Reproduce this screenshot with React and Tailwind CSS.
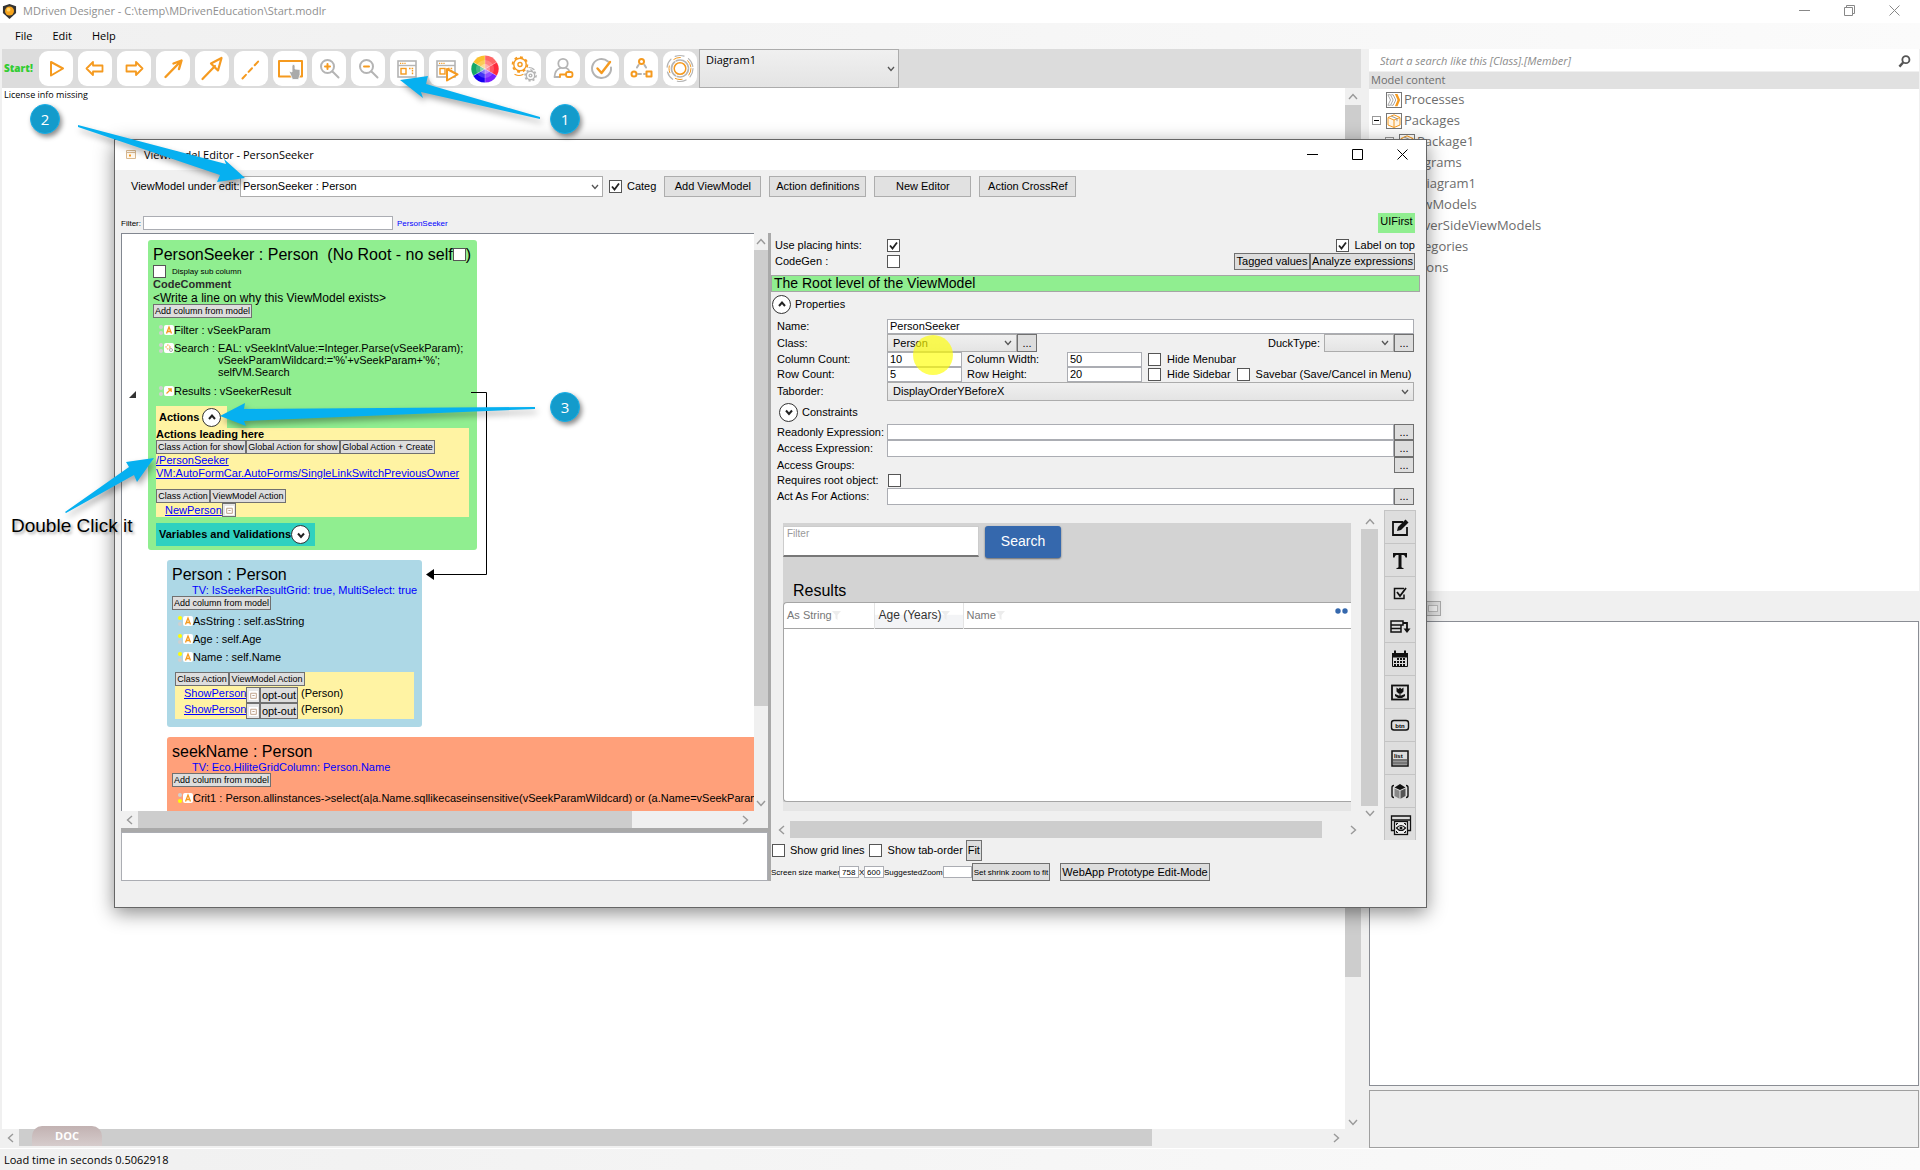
import React from "react";

const ORANGE = "#f59a1f";
const GRAY = "#b4b4b4";

function Check({ id, checked, label, className = "size-[13px]" }) {
    return (
        <span className="relative inline-flex shrink-0">
            <input id={id} type="checkbox" defaultChecked={checked} aria-label={label} className={"peer appearance-none border border-[#555] bg-white " + className} />
            <svg viewBox="0 0 13 13" className="pointer-events-none absolute inset-0 hidden size-[13px] peer-checked:block">
                <path d="M3 6.5 5.5 9.5 10 3.5" fill="none" stroke="#222" strokeWidth="1.8" />
            </svg>
        </span>
    );
}

function Select({ id, label, value, className = "", selectClass = "", chevron = "right-[4px]" }) {
    return (
        <span className={"relative inline-flex shrink-0 " + className}>
            <select id={id} aria-label={label} className={"h-full w-full appearance-none border border-[#acacac] " + selectClass}>
                <option>{value}</option>
            </select>
            <svg viewBox="0 0 8 6" className={"pointer-events-none absolute top-1/2 h-[6px] w-[8px] -translate-y-1/2 " + chevron}>
                <path d="M1 1 4 4.5 7 1" fill="none" stroke="#555" strokeWidth="1.3" />
            </svg>
        </span>
    );
}

function FlatButton({ children, className = "" }) {
    return (
        <button className={"flex shrink-0 items-center justify-center border border-[#707070] bg-[#dddddd] whitespace-nowrap " + className}>
            {children}
        </button>
    );
}

const ARROWS = {
    up: "M2 8 6 3.5 10 8",
    down: "M2 4 6 8.5 10 4",
    left: "M8 2 3.5 6 8 10",
    right: "M4 2 8.5 6 4 10",
};

function ScrollArrow({ dir }) {
    return (
        <svg viewBox="0 0 12 12" className="size-[12px] shrink-0">
            <path d={ARROWS[dir]} fill="none" stroke="#999" strokeWidth="1.4" />
        </svg>
    );
}

function Expander({ open, label }) {
    return (
        <button aria-label={label} className="flex size-[19px] shrink-0 items-center justify-center rounded-full border border-[#333] bg-white">
            <svg viewBox="0 0 10 10" className="size-[10px]">
                <path d={open ? "M2 7 5 3.5 8 7" : "M2 3.5 5 7 8 3.5"} fill="none" stroke="#222" strokeWidth="2" />
            </svg>
        </button>
    );
}

/* ---------- main toolbar ---------- */

function WindowShape() {
    return (
        <>
            <rect x="8" y="10" width="18" height="16" fill="none" stroke={GRAY} strokeWidth="1.6" />
            <path d="M8 14.5h18" stroke={GRAY} strokeWidth="1.4" />
            <path d="M10 12.3h6" stroke={ORANGE} strokeWidth="1.2" strokeDasharray="1.2 1" />
            <rect x="11" y="17.5" width="5" height="5.5" fill="none" stroke={ORANGE} strokeWidth="1.4" />
            <path d="M19 17.5h5M22.5 19v5" stroke={ORANGE} strokeWidth="1.4" strokeDasharray="1.6 1" />
        </>
    );
}

const WHEEL = ["#ff6666", "#ff2b3d", "#7a1fff", "#1500f0", "#14a866", "#fbc02d"];

function ColorWheel() {
    return (
        <>
            {WHEEL.map((c, i) => {
                const a = (i * 60 - 90) * Math.PI / 180;
                const b = a + Math.PI / 3;
                const p = (t) => (17 + 13.6 * Math.cos(t)) + " " + (18 + 13.6 * Math.sin(t));
                return <path key={c} d={`M17 18 L${p(a)} A13.6 13.6 0 0 1 ${p(b)}Z`} fill={c} />;
            })}
            <circle cx="17" cy="18" r="9" fill="#fff" opacity="0.2" />
            <circle cx="17" cy="18" r="5" fill="#fff" opacity="0.35" />
            <path d="M17 4.5v27M5.3 11.2 28.7 24.8M5.3 24.8 28.7 11.2" stroke="#fff" strokeWidth="0.5" opacity="0.6" />
        </>
    );
}

function Cog({ x, y, r, color }) {
    return (
        <g fill="none" stroke={color}>
            <circle cx={x} cy={y} r={r} strokeWidth="1.4" />
            <circle cx={x} cy={y} r={r + 1.2} strokeWidth="1.8" pathLength="32" strokeDasharray="2 2" />
            <circle cx={x} cy={y} r={r / 3} strokeWidth="1.4" />
        </g>
    );
}

const line = { fill: "none", stroke: ORANGE, strokeWidth: 2, strokeLinejoin: "round", strokeLinecap: "round" };
const grayLine = { ...line, stroke: GRAY };

const TOOLS = [
    ["Run", <path d="M12 11 24 17.5 12 24.5Z" {...line} />],
    ["Back", <path d="M8.5 17.5 15 11v3.5h9.5v6H15V24Z" {...line} strokeWidth="1.8" />],
    ["Forward", <path d="M25.5 17.5 19 11v3.5H9.5v6H19V24Z" {...line} strokeWidth="1.8" />],
    ["Association", <path d="M9.5 26 25 10M17.5 12.5 25.5 9.5 23 18" {...line} strokeWidth="2.4" />],
    ["Inheritance", <path d="M7.500 28 20 15M16 12.5 26.5 7 23 19.5Z" {...line} strokeWidth="2.2" />],
    ["Dashed line", <path d="M8.5 27.5 26 8.5" {...line} strokeDasharray="5 4" />],
    ["Placing", <><rect x="6" y="10" width="23" height="15.5" {...line} /><path d="M16 20l3 1v-6.5q1.5-2 3 0v3.5l5 .5v5l-1.5 5h-6Z" fill="#aaa" stroke="#fff" strokeWidth="0.8" /></>],
    ["Zoom in", <><circle cx="15.5" cy="15.5" r="6.5" {...grayLine} /><path d="m20.5 20.5 6 6" {...grayLine} /><path d="M15.5 13v5M13 15.5h5" {...line} /></>],
    ["Zoom out", <><circle cx="15.5" cy="15.5" r="6.5" {...grayLine} /><path d="m20.5 20.5 6 6" {...grayLine} /><path d="M13 15.5h5" {...line} /></>],
    ["ViewModel editor", <WindowShape />],
    ["Run ViewModel", <><WindowShape /><path d="M18 18 28.5 23.5 18 29.5Z" {...line} fill="#fff" /></>],
    ["Colors", <ColorWheel />],
    ["Settings", <><Cog x={13} y={13.5} r={6.2} color={ORANGE} /><Cog x={23.5} y={24.5} r={4.2} color={GRAY} /><path d="M8 23.500q4 2 8 0" {...line} strokeWidth="1.2" /><path d="M22 16.5q3 0 5 2" {...grayLine} strokeWidth="1.2" /></>],
    ["Access", <><circle cx="17" cy="12.5" r="4.7" {...grayLine} strokeWidth="1.8" /><path d="M14.5 17q-5.500 1.5-6 9h5M20 17q2 .5 3 2.5" {...grayLine} strokeWidth="1.8" /><rect x="20" y="21" width="6.5" height="5" rx="2" {...line} strokeWidth="1.8" /><path d="M20 23.5h-6v2.5" {...line} strokeWidth="1.8" /></>],
    ["Validate", <><path d="M23 10.5a9.5 9.5 0 1 0 3 6" {...grayLine} /><path d="m12.5 17.5 4 4.5 8.5-11" {...line} strokeWidth="2.4" /></>],
    ["Structure", <><path d="M14.5 14 11.5 19M20.5 14l3 5M14 23h7" {...grayLine} strokeDasharray="3 3" /><circle cx="17.5" cy="10.5" r="2.5" {...line} /><circle cx="10" cy="23" r="2.5" {...line} /><rect x="22.5" y="20.5" width="5" height="5" {...line} /></>],
    ["Generate", <><circle cx="17" cy="17.5" r="13" {...grayLine} strokeWidth="1.2" strokeDasharray="9 5" /><circle cx="17" cy="17.5" r="11" {...line} strokeWidth="1" strokeDasharray="7 8" /><circle cx="17" cy="17.5" r="8.5" {...grayLine} strokeWidth="1.7" strokeDasharray="16 2" /><circle cx="17" cy="17.5" r="5.8" {...line} strokeWidth="1.5" /></>],
];

function Toolbar() {
    return (
        <div className="ml-[2px] flex h-[39px] bg-[#dcdcdc]">
            <button className="w-[37px] shrink-0 pl-[2px] text-left text-[10px] font-extrabold text-[#32cd32]">Start!</button>
            <div className="flex items-center gap-[5px]">
                {TOOLS.map(([name, icon]) => (
                    <button key={name} aria-label={name} className="h-[35px] w-[34px] shrink-0 rounded-[9px] bg-white">
                        <svg viewBox="0 0 34 35" className="h-[35px] w-[34px]">{icon}</svg>
                    </button>
                ))}
            </div>
            <Select label="Diagram" value="Diagram1" className="ml-[2px] h-[39px] w-[200px]" selectClass="bg-linear-to-b from-[#f0f0f0] to-[#e4e4e4] px-[6px] pb-[16px] text-[11px]" />
        </div>
    );
}

/* ---------- model tree, right side ---------- */

function PackageIcon() {
    return (
        <svg viewBox="0 0 14 14" className="size-[16px] shrink-0 border border-[#777]">
            <path d="M1 3.5 7 .8l6 2.700v7.500L7 13.500 1 11ZM1 3.500l6 2.500 6-2.500M7 6v7.500" fill="#fff6e8" stroke={ORANGE} />
            <path d="M4 2 10 4.700v2.500" fill="none" stroke="#999" />
        </svg>
    );
}

function ProcessIcon() {
    return (
        <svg viewBox="0 0 16 16" className="size-[16px] shrink-0 border border-[#777]">
            <path d="M1 2h3l3 6-3 6H1l3-6ZM5 2h2l3 6-3 6H5" fill="none" stroke="#999" />
            <path d="M9 1h3l3 7-3 7H9l3-7Z" fill={ORANGE} />
        </svg>
    );
}

const TREE = [
    { name: "Processes", level: 0, icon: <ProcessIcon /> },
    { name: "Packages", level: 0, icon: <PackageIcon />, open: true },
    { name: "Package1", level: 1, icon: <PackageIcon />, open: true },
    { name: "Diagrams", level: 0, icon: <PackageIcon /> },
    { name: "Diagram1", level: 1, icon: <PackageIcon /> },
    { name: "ViewModels", level: 0, icon: <PackageIcon /> },
    { name: "ServerSideViewModels", level: 0, icon: <PackageIcon /> },
    { name: "Categories", level: 0, icon: <PackageIcon /> },
    { name: "Actions", level: 0, icon: <PackageIcon /> },
];

function ModelPanel() {
    return (
        <aside className="flex w-[551px] shrink-0 flex-col pr-px text-[#6d6d6d]">
            <div className="flex h-[22px] items-center bg-white pt-[3px] pr-[8px] pl-[11px]">
                <input aria-label="Search model" placeholder="Start a search like this [Class].[Member]" className="min-w-0 flex-1 text-[11px] italic outline-none placeholder:text-[#8c8c8c]" />
                <svg viewBox="0 0 14 14" className="size-[13px]">
                    <circle cx="8.5" cy="5" r="3.8" fill="none" stroke="#555" strokeWidth="2" />
                    <path d="M5.5 8 1.5 12.5" stroke="#555" strokeWidth="2.6" />
                </svg>
            </div>
            <h2 className="mt-px h-[17px] bg-[#e1e1e1] pl-[2px] text-[11px] leading-[16px]">Model content</h2>
            <ul className="flex-[503_1_0px] bg-white text-[13px]">
                {TREE.map((t) => (
                    <li key={t.name} className={"flex h-[21px] items-center " + (t.level ? "pl-[16px]" : "pl-[3px]")}>
                        <span className="w-[14px] shrink-0">
                            {t.open && <span className="flex size-[9px] items-center justify-center border border-[#999] bg-white"><span className="h-px w-[5px] bg-black" /></span>}
                        </span>
                        {t.icon}
                        <span className="pl-[2px]">{t.name}</span>
                    </li>
                ))}
            </ul>
            <div className="flex h-[30px] items-center bg-[#f0f0f0] pt-[6px] pl-[56px]">
                <button aria-label="Details" className="flex h-[15px] w-[16px] items-center justify-center border border-[#aaa] bg-[#e0e0e0]">
                    <span className="h-[7px] w-[10px] border border-[#bbb] bg-[#f4f4f4]" />
                </button>
            </div>
            <div className="flex-[464_1_0px] border border-[#8a8d94] bg-white" />
            <div className="mt-[4px] h-[58px] border border-[#a0a0a0] bg-[#f0f0f0]" />
        </aside>
    );
}

/* ---------- view model columns, left side of the dialog ---------- */

function ColumnIcon({ kind = "text", top = "bg-[#d0d0d0]", bottom = "bg-[#d0d0d0]" }) {
    return (
        <span className="flex h-[10px] w-[15px] shrink-0 gap-px">
            <span className="flex w-[4px] flex-col justify-between">
                <span className={"h-[4px] rounded-[2px] " + top} />
                <span className={"h-[4px] rounded-[2px] " + bottom} />
            </span>
            <svg viewBox="0 0 10 10" className="size-[10px] rounded-[2px] bg-white">
                {kind === "text" && <path d="M2.5 8.5 5 2 7.5 8.5M3.5 6.5h3" fill="none" stroke={ORANGE} strokeWidth="1.3" />}
                {kind === "gear" && <><circle cx="4" cy="4" r="2" fill="none" stroke={ORANGE} strokeDasharray="1.5 1" /><circle cx="7" cy="7" r="1.5" fill="none" stroke="#aaa" /></>}
                {kind === "arrow" && <path d="M2.5 7.5 7 3M4 2.8h3.2V6" fill="none" stroke={ORANGE} strokeWidth="1.2" />}
            </svg>
        </span>
    );
}

function Column({ children, ...icon }) {
    return (
        <div className="flex h-[18px] items-center pl-[6px] text-[11px]">
            <ColumnIcon {...icon} />
            {children}
        </div>
    );
}

function MiniWindow({ className = "" }) {
    return (
        <button aria-label="Open action" className={"flex w-[14px] shrink-0 items-center justify-center border border-[#707070] bg-[#e6e6e6] " + className}>
            <svg viewBox="0 0 8 8" className="size-[9px] bg-white">
                <path d="M1.5 2h5v4.5h-5ZM3 4h2" fill="none" stroke="#b99a80" strokeWidth="0.8" />
            </svg>
        </button>
    );
}

const MARK_YELLOW = "bg-[#ffff00]";

function Connector() {
    return (
        <svg viewBox="0 0 64 194" className="absolute top-[152px] left-[303px] h-[194px] w-[64px]">
            <path d="M46 6.5H61.5V188.5H8" fill="none" stroke="#000" />
            <path d="M1 188.5 9 183v11Z" fill="#000" />
        </svg>
    );
}

function ViewModelCanvas() {
    return (
        <div className="relative flex min-w-0 flex-1 overflow-hidden border-t border-l border-[#828790] bg-white whitespace-nowrap">
            <div className="w-[26px] shrink-0 pt-[157px] pl-[7px]">
                <svg viewBox="0 0 7 7" className="size-[7px]"><path d="M7 0v7H0Z" fill="#333" /></svg>
            </div>
            <div className="shrink-0 pt-[6px]">
                <section className="w-[329px] rounded-[3px] bg-[#90ee90] px-[5px] pt-[4px] pb-[4px]">
                    <h3 className="flex h-[20px] items-center text-[16px] whitespace-pre">
                        PersonSeeker : Person  (No Root - no self<Check label="Has self" className="size-[13px]" />)
                    </h3>
                    <div className="flex h-[14px] items-center gap-[6px] text-[8px]">
                        <Check id="display-sub" />
                        <label htmlFor="display-sub">Display sub column</label>
                    </div>
                    <div className="h-[13px] text-[11px] leading-[13px] font-bold text-[#2b2b2b]">CodeComment</div>
                    <div className="h-[13px] text-[12px] leading-[14px]">&lt;Write a line on why this ViewModel exists&gt;</div>
                    <FlatButton className="h-[14px] w-[99px] text-[9px]">Add column from model</FlatButton>
                    <div className="pt-[3px]">
                        <Column>Filter : vSeekParam</Column>
                    </div>
                    <div className="mt-[3px] flex pl-[6px] text-[11px] leading-[12px]">
                        <span className="pt-px"><ColumnIcon kind="gear" /></span>
                        <span className="w-[44px]">Search :</span>
                        <span className="whitespace-pre">{"EAL: vSeekIntValue:=Integer.Parse(vSeekParam);\nvSeekParamWildcard:='%'+vSeekParam+'%';\nselfVM.Search"}</span>
                    </div>
                    <div className="pt-[4px]">
                        <Column kind="arrow">Results : vSeekerResult</Column>
                    </div>

                    <div className="mt-[6px] ml-[3px] flex h-[22px] w-[71px] items-center gap-[3px] bg-[#fff3a3] pl-[3px] text-[11px] font-bold">
                        Actions <Expander open label="Collapse actions" />
                    </div>
                    <div className="ml-[3px] w-[313px] bg-[#fff3a3] text-[11px]">
                        <div className="h-[12px] leading-[12px] font-bold">Actions leading here</div>
                        <div className="flex h-[14px] text-[9px]">
                            <FlatButton className="w-[90px]">Class Action for show</FlatButton>
                            <FlatButton className="w-[94px]">Global Action for show</FlatButton>
                            <FlatButton className="w-[95px]">Global Action + Create</FlatButton>
                        </div>
                        <div className="h-[13px] leading-[13px]"><a href="#" className="text-[#0000ff] underline">/PersonSeeker</a></div>
                        <div className="h-[13px] leading-[13px]"><a href="#" className="text-[#0000ff] underline">VM:AutoFormCar.AutoForms/SingleLinkSwitchPreviousOwner</a></div>
                        <div className="mt-[9px] flex h-[14px] text-[9px]">
                            <FlatButton className="w-[54px]">Class Action</FlatButton>
                            <FlatButton className="w-[76px]">ViewModel Action</FlatButton>
                        </div>
                        <div className="flex h-[14px] pl-[9px] leading-[14px]">
                            <a href="#" className="w-[57px] text-[#0000ff] underline">NewPerson</a>
                            <MiniWindow />
                        </div>
                    </div>
                    <div className="mt-[6px] ml-[3px] flex h-[23px] w-[159px] items-center justify-between bg-[#2fd1c0] pr-[6px] pl-[3px] text-[11px] font-bold">
                        Variables and Validations <Expander label="Expand variables and validations" />
                    </div>
                </section>

                <section className="mt-[10px] ml-[19px] w-[255px] rounded-[3px] bg-[#add8e6] px-[5px] pt-[4px] pb-[8px]">
                    <h3 className="flex h-[20px] items-center text-[16px]">Person : Person</h3>
                    <div className="h-[12px] pl-[20px] text-[11px] leading-[12px] text-[#0000ff]">TV: IsSeekerResultGrid: true, MultiSelect: true</div>
                    <FlatButton className="mb-[2px] h-[14px] w-[99px] text-[9px]">Add column from model</FlatButton>
                    <Column top={MARK_YELLOW}>AsString : self.asString</Column>
                    <Column top={MARK_YELLOW}>Age : self.Age</Column>
                    <Column top={MARK_YELLOW}>Name : self.Name</Column>
                    <div className="mt-[6px] ml-[3px] w-[239px] bg-[#fff3a3] text-[11px]">
                        <div className="mb-px flex h-[14px] text-[9px]">
                            <FlatButton className="w-[54px]">Class Action</FlatButton>
                            <FlatButton className="w-[76px]">ViewModel Action</FlatButton>
                        </div>
                        {[1, 2].map((n) => (
                            <div key={n} className="flex h-[16px] pl-[9px] leading-[13px]">
                                <a href="#" className="w-[62px] text-[#0000ff] underline">ShowPerson</a>
                                <MiniWindow />
                                <FlatButton className="w-[38px]">opt-out</FlatButton>
                                <span className="pl-[3px]">(Person)</span>
                            </div>
                        ))}
                    </div>
                </section>

                <section className="mt-[10px] ml-[19px] h-[100px] w-[700px] rounded-[3px] bg-[#ffa07a] px-[5px] pt-[4px]">
                    <h3 className="flex h-[20px] items-center text-[16px]">seekName : Person</h3>
                    <div className="h-[12px] pl-[20px] text-[11px] leading-[12px] text-[#0000ff]">TV: Eco.HiliteGridColumn: Person.Name</div>
                    <FlatButton className="mb-[2px] h-[14px] w-[99px] text-[9px]">Add column from model</FlatButton>
                    <Column bottom={MARK_YELLOW}>Crit1 : Person.allinstances-&gt;select(a|a.Name.sqllikecaseinsensitive(vSeekParamWildcard) or (a.Name=vSeekParam))</Column>
                </section>
            </div>
            <Connector />
        </div>
    );
}

/* ---------- properties, right side of the dialog ---------- */

const comboStyle = "bg-linear-to-b from-[#f0f0f0] to-[#e4e4e4] pl-[5px]";

function Field({ id, label, height, children }) {
    return (
        <div className={"flex items-stretch " + height}>
            <label htmlFor={id} className="flex w-[110px] shrink-0 items-center whitespace-nowrap">{label}</label>
            {children}
        </div>
    );
}

function TextBox({ id, value = "", className = "flex-1" }) {
    return <input id={id} defaultValue={value} className={"min-w-0 border border-[#abadb3] bg-white px-[2px] " + className} />;
}

function Properties() {
    return (
        <div className="pt-[3px] pr-[12px] pl-[6px]">
            <Field id="vm-name" label="Name:" height="h-[15px]"><TextBox id="vm-name" value="PersonSeeker" /></Field>
            <Field id="vm-class" label="Class:" height="h-[18px]">
                <Select id="vm-class" value="Person" className="w-[130px]" selectClass={comboStyle} chevron="right-[5px]" />
                <FlatButton className="w-[20px]">...</FlatButton>
                <label htmlFor="vm-duck" className="mr-[4px] ml-auto self-center">DuckType:</label>
                <Select id="vm-duck" value="" className="w-[70px]" selectClass={comboStyle} chevron="right-[5px]" />
                <FlatButton className="w-[20px]">...</FlatButton>
            </Field>
            <Field id="vm-cols" label="Column Count:" height="h-[15px]">
                <TextBox id="vm-cols" value="10" className="w-[75px]" />
                <label htmlFor="vm-colw" className="flex w-[105px] items-center pl-[5px]">Column Width:</label>
                <TextBox id="vm-colw" value="50" className="w-[75px]" />
                <span className="flex items-center gap-[6px] pl-[6px]">
                    <Check id="hide-menu" /><label htmlFor="hide-menu">Hide Menubar</label>
                </span>
            </Field>
            <Field id="vm-rows" label="Row Count:" height="h-[15px]">
                <TextBox id="vm-rows" value="5" className="w-[75px]" />
                <label htmlFor="vm-rowh" className="flex w-[105px] items-center pl-[5px]">Row Height:</label>
                <TextBox id="vm-rowh" value="20" className="w-[75px]" />
                <span className="flex items-center gap-[6px] pl-[6px] whitespace-nowrap">
                    <Check id="hide-side" /><label htmlFor="hide-side">Hide Sidebar</label>
                    <Check id="savebar" /><label htmlFor="savebar">Savebar (Save/Cancel in Menu)</label>
                </span>
            </Field>
            <Field id="vm-tab" label="Taborder:" height="h-[19px]">
                <Select id="vm-tab" value="DisplayOrderYBeforeX" className="flex-1" selectClass={comboStyle} chevron="right-[5px]" />
            </Field>
            <div className="mb-px flex h-[22px] items-center gap-[4px] pl-[2px]"><Expander label="Expand constraints" />Constraints</div>
            <Field id="vm-ro" label="Readonly Expression:" height="h-[16px]"><TextBox id="vm-ro" /><FlatButton className="w-[20px]">...</FlatButton></Field>
            <Field id="vm-acc" label="Access Expression:" height="h-[17px]"><TextBox id="vm-acc" /><FlatButton className="w-[20px]">...</FlatButton></Field>
            <Field id="vm-groups" label="Access Groups:" height="h-[16px]"><button id="vm-groups" className="ml-auto w-[20px] border border-[#707070] bg-[#dddddd]">...</button></Field>
            <Field id="vm-root" label="Requires root object:" height="h-[15px]"><span className="flex items-center pl-px"><Check id="vm-root" /></span></Field>
            <Field id="vm-act" label="Act As For Actions:" height="h-[17px]"><TextBox id="vm-act" /><FlatButton className="w-[20px]">...</FlatButton></Field>
        </div>
    );
}

function Funnel() {
    return <svg viewBox="0 0 9 9" className="inline size-[9px]"><path d="M0 0h9L5.5 4v5L3.5 7.500V4Z" fill="#ececec" /></svg>;
}

function Preview() {
    return (
        <div className="mt-[13px] mr-[10px] ml-[12px] flex min-w-0 flex-1 flex-col bg-[#d3d3d3]">
            <div className="flex h-[37px] items-center gap-[6px]">
                <div className="flex h-[31px] w-[196px] flex-col border border-b-2 border-[#ccc] border-b-[#777] bg-white px-[3px]">
                    <label htmlFor="seek-filter" className="text-[10px] leading-[14px] text-[#999]">Filter</label>
                    <input id="seek-filter" className="h-[12px] outline-none" />
                </div>
                <button className="h-[32px] w-[76px] rounded-[3px] bg-[#3568ad] text-[14px] text-white shadow-[0_1px_2px_rgba(0,0,0,0.5)]">Search</button>
            </div>
            <h3 className="mt-[19px] h-[23px] pl-[10px] text-[16px] leading-[24px]">Results</h3>
            <div className="flex flex-1 items-start rounded-l-[4px] border-y border-l border-[#a5a5a5] bg-white">
                <table className="w-full border-collapse text-[11px] text-[#777]">
                    <thead>
                        <tr className="h-[25px] border-b border-[#a5a5a5] text-left">
                            <th className="w-[90px] pl-[3px] font-normal">As String<Funnel /></th>
                            <th className="w-[89px] border-x border-[#e4e4e4] bg-linear-to-b from-white from-45% to-[#f3f4f6] to-50% pl-[4px] text-[12px] font-normal text-[#333]">Age (Years)<Funnel /></th>
                            <th className="pl-[3px] font-normal">Name<Funnel /></th>
                            <th className="w-[16px] pb-[8px]">
                                <svg viewBox="0 0 13 6" className="h-[6px] w-[13px]"><circle cx="3" cy="3" r="2.7" fill="#3568ad" /><circle cx="10" cy="3" r="2.7" fill="#3568ad" /></svg>
                            </th>
                        </tr>
                    </thead>
                </table>
            </div>
            <div className="h-[9px] bg-[#e5e5e5]" />
        </div>
    );
}

const ink = { fill: "none", stroke: "#111", strokeWidth: 1.8 };

const WIDGETS = [
    ["Edit box", <><path d="M19 11H9v13h14v-8" {...ink} /><path d="m13 20 1-4 7.5-7.5 3 3L17 19Z" fill="#111" /></>],
    ["Text", <path d="M9 9h14v4.5h-1.5q-.5-2.5-2-2.5h-2v12q0 1 2 1V25h-7v-1q2 0 2-1V11h-2q-1.5 0-2 2.5H9Z" fill="#111" />],
    ["Check box", <><path d="M20 11.5h-9.5v10h9.5v-4" {...ink} strokeWidth="1.5" /><path d="m13 15 3 4 6-8" {...ink} /></>],
    ["Combo box", <><path d="M7 11h12v4H7ZM7 15v7h10v-7M7 18.5h10" {...ink} strokeWidth="1.5" /><path d="M19 13h4v8" {...ink} /><path d="M19.5 18.5h7L23 23Z" fill="#111" /></>],
    ["Calendar", <><path d="M8.5 10.500h15v13h-15Z" fill="#ddd" stroke="#111" /><path d="M8 10h16v4.500H8Z" fill="#111" /><path d="M11 7.5v4M21 7.5v4" {...ink} strokeWidth="2" /><path d="M13 16h9M10 19h12M10 22h12" stroke="#111" strokeWidth="2" strokeDasharray="2 1" /></>],
    ["Image", <><rect x="8" y="9.5" width="16" height="14" {...ink} /><path d="M12.500 11.500l2 1.500 1.5-1.500 1.500 1.5 2-1.5v4l-2 2h-3l-2-2ZM11 18l5 2 5-2v2l-3 2h-4l-3-2ZM15.5 16h1v6h-1Z" fill="#111" /></>],
    ["Button", <><rect x="7.5" y="11.5" width="17" height="9.5" rx="2.5" {...ink} strokeWidth="1.4" /><text x="16" y="18.5" textAnchor="middle" fontSize="6" fontWeight="700">btn</text></>],
    ["List", <><rect x="8" y="9" width="16" height="15" {...ink} strokeWidth="1.5" /><rect x="9" y="17" width="14" height="6" fill="#999" /><path d="M9 18h14M9 21h14" stroke="#555" /><text x="10" y="15.5" fontSize="6" fontWeight="700">list</text></>],
    ["Component", <><path d="M10 10.500q-2 0-2 2v8q0 2 2 2M22 10.500q2 0 2 2v8q0 2-2 2" {...ink} strokeWidth="1.4" /><path d="m10.500 12.500 5.500-3.500 5.500 3.500-5.500 2.500Z" fill="#111" /><path d="m10.500 13.500 5 2.300v8L10.500 21Z" fill="#888" /><path d="m21.500 13.500-5 2.300v8l5-2.800Z" fill="#555" /></>],
    ["Browser preview", <><path d="M10 22.5H7.5V8h19v14.5H24M7.5 12h19" {...ink} strokeWidth="1.3" /><rect x="10.5" y="13.5" width="13" height="13" fill="#eee" stroke="#111" strokeWidth="1.3" /><path d="M12.500 17v-1.500H14M20 15.500h1.500V17M12.500 23v1.500H14M20 24.500h1.500V23" {...ink} strokeWidth="1" /><path d="M12.500 20q4.500-5 9 0-4.500 5-9 0Z" {...ink} strokeWidth="1.2" /><circle cx="17" cy="20" r="1.5" fill="#111" /></>],
];

function PropertyPane() {
    return (
        <div className="flex min-w-0 flex-1 flex-col pt-[4px]">
            <div className="flex h-[16px] items-center pr-[11px] pl-[4px]">
                <label htmlFor="placing" className="w-[112px]">Use placing hints:</label>
                <Check id="placing" checked />
                <span className="ml-auto flex items-center gap-[5px]">
                    <Check id="label-top" checked /><label htmlFor="label-top">Label on top</label>
                </span>
            </div>
            <div className="flex h-[17px] items-center pr-[11px] pl-[4px]">
                <label htmlFor="codegen" className="w-[112px]">CodeGen :</label>
                <Check id="codegen" />
                <FlatButton className="ml-auto h-[17px] w-[76px]">Tagged values</FlatButton>
                <FlatButton className="h-[17px] w-[105px]">Analyze expressions</FlatButton>
            </div>
            <h2 className="mt-[5px] mr-[6px] h-[17px] border border-[#a5a5a5] bg-[#90ee90] pl-[2px] text-[14px] leading-[15px]">The Root level of the ViewModel</h2>
            <div className="flex h-[24px] items-center gap-[4px] pl-px"><Expander open label="Collapse properties" />Properties</div>
            <Properties />

            <div className="mt-[5px] flex">
                <div className="flex min-w-0 flex-1 flex-col">
                    <div className="flex h-[311px]">
                        <div className="flex min-w-0 flex-1 pb-[10px]"><Preview /></div>
                        <div className="flex w-[17px] flex-col items-center pt-[6px] pb-[2px]">
                            <ScrollArrow dir="up" />
                            <div className="my-px w-full flex-1 bg-[#cdcdcd]" />
                            <ScrollArrow dir="down" />
                        </div>
                    </div>
                    <div className="flex h-[17px] items-center pr-[19px] pl-[5px]">
                        <ScrollArrow dir="left" />
                        <div className="mr-[25px] ml-[2px] h-full flex-1 bg-[#cdcdcd]" />
                        <ScrollArrow dir="right" />
                    </div>
                </div>
                <div className="mr-[10px] ml-[6px] flex w-[32px] flex-col">
                    {WIDGETS.map(([name, icon]) => (
                        <button key={name} aria-label={name} className="h-[33px] border border-b-0 border-[#c4c4c4] bg-[#dddddd]">
                            <svg viewBox="0 0 32 33" className="-ml-px h-[33px] w-[32px]">{icon}</svg>
                        </button>
                    ))}
                </div>
            </div>

            <div className="flex h-[21px] items-center">
                <span className="flex gap-[5px] pl-px"><Check id="grid-lines" /><label htmlFor="grid-lines" className="leading-[12px]">Show grid lines</label></span>
                <span className="flex gap-[6px] pl-[4px]"><Check id="tab-order" /><label htmlFor="tab-order" className="leading-[12px]">Show tab-order</label></span>
                <FlatButton className="ml-[3px] h-[21px] w-[16px]">Fit</FlatButton>
            </div>
            <div className="mt-[2px] flex h-[18px] items-center text-[8px] whitespace-nowrap">
                <label htmlFor="marker-w" className="w-[68px]">Screen size marker</label>
                <TextBox id="marker-w" value="758" className="h-[12px] w-[20px]" />
                <label htmlFor="marker-h" className="w-[5px]">X</label>
                <TextBox id="marker-h" value="600" className="h-[12px] w-[20px]" />
                <label htmlFor="zoom" className="w-[59px]">SuggestedZoom</label>
                <TextBox id="zoom" className="h-[12px] w-[29px]" />
                <FlatButton className="h-[18px] w-[78px]">Set shrink zoom to fit</FlatButton>
                <FlatButton className="ml-[10px] h-[18px] w-[150px] text-[11px]">WebApp Prototype Edit-Mode</FlatButton>
            </div>
        </div>
    );
}

/* ---------- dialog ---------- */

function CaptionButtons({ color, className }) {
    return (
        <div className={"ml-auto flex items-center " + className}>
            <button aria-label="Minimize" className="flex w-[45px] justify-center"><svg viewBox="0 0 11 11" className="size-[11px]"><path d="M0 5.5h11" stroke={color} /></svg></button>
            <button aria-label="Maximize" className="flex w-[45px] justify-center"><svg viewBox="0 0 11 11" className="size-[11px]"><path d={color === "#000" ? "M.5 .5h10v10H.5Z" : "M.5 2.5h8v8h-8ZM2.5 2.5v-2h8v8h-2"} fill="none" stroke={color} /></svg></button>
            <button aria-label="Close" className="flex w-[45px] justify-center"><svg viewBox="0 0 11 11" className="size-[11px]"><path d="M.5 .5l10 10M10.5 .5l-10 10" stroke={color} /></svg></button>
        </div>
    );
}

function EditorDialog() {
    return (
        <div role="dialog" aria-label="ViewModel Editor" className="absolute top-[139px] right-[493px] left-[114px] border border-[#666] bg-[#f0f0f0] pb-[26px] text-[11px] leading-[13px] text-black shadow-[0_5px_18px_rgba(0,0,0,0.45)] font-['Liberation_Sans',Arial,sans-serif]">
            <div className="flex h-[30px] items-center bg-white pb-[2px] font-['Open_Sans',sans-serif]">
                <svg viewBox="0 0 10 10" className="mr-[8px] ml-[11px] size-[10px]">
                    <path d="M.5 1.5h9v8h-9ZM.5 3.5h9" fill="#fff8ee" stroke="#d8b890" />
                    <path d="M3 5.5h2v2H3Z" fill={ORANGE} />
                </svg>
                <span className="text-[11px]">ViewModel Editor - PersonSeeker</span>
                <CaptionButtons color="#000" className="pr-px" />
            </div>
            <div className="flex h-[27px] items-end pl-[16px]">
                <label htmlFor="vm-edit" className="w-[109px] leading-[21px]">ViewModel under edit:</label>
                <Select id="vm-edit" value="PersonSeeker : Person" className="h-[21px] w-[363px]" selectClass="border-[#707070] bg-white pl-[2px]" />
                <span className="flex h-[21px] items-center gap-[5px] pr-[8px] pl-[6px]">
                    <Check id="categ" checked /><label htmlFor="categ">Categ</label>
                </span>
                <div className="flex gap-[8px]">
                    {["Add ViewModel", "Action definitions", "New Editor", "Action CrossRef"].map((t) => (
                        <button key={t} className="h-[21px] w-[97px] border border-[#adadad] bg-[#e1e1e1]">{t}</button>
                    ))}
                </div>
            </div>
            <div className="mt-[16px] flex h-[20px] items-center pr-[11px] pl-[6px] text-[8px]">
                <label htmlFor="vm-filter" className="w-[22px]">Filter:</label>
                <TextBox id="vm-filter" className="h-[14px] w-[250px]" />
                <a href="#" className="pl-[4px] text-[#0000ff]">PersonSeeker</a>
                <span className="ml-auto h-[20px] w-[37px] bg-[#90ee90] text-center text-[11px] leading-[16px]">UIFirst</span>
            </div>

            <div className="flex pl-[6px]">
                <div className="flex w-[650px] shrink-0 flex-col border-r-[3px] border-[#a9a9a9]">
                    <div className="flex h-[578px]">
                        <ViewModelCanvas />
                        <div className="flex w-[14px] flex-col items-center pt-[3px] pb-[2px]">
                            <ScrollArrow dir="up" />
                            <div className="mt-[2px] mb-[91px] w-full flex-1 bg-[#cdcdcd]" />
                            <ScrollArrow dir="down" />
                        </div>
                    </div>
                    <div className="flex h-[17px] items-center pr-[17px] pl-[3px]">
                        <ScrollArrow dir="left" />
                        <div className="mr-[107px] ml-[2px] h-full flex-1 bg-[#cdcdcd]" />
                        <ScrollArrow dir="right" />
                    </div>
                    <div className="h-[4px] bg-[#a9a9a9]" />
                    <textarea aria-label="Expression" className="h-[49px] resize-none border border-[#abadb3] bg-white" />
                </div>
                <PropertyPane />
            </div>
        </div>
    );
}

/* ---------- tutorial marks drawn over the windows ---------- */

function Step({ n, className }) {
    return (
        <span className={"absolute flex size-[30px] items-center justify-center rounded-full border border-[#1ab0e8] bg-[#149bcb] font-['Open_Sans',sans-serif] text-[15px] text-white shadow-[2px_3px_5px_rgba(0,0,0,0.45)] " + className}>
            {n}
        </span>
    );
}

function Annotations() {
    return (
        <div className="pointer-events-none absolute inset-0 overflow-hidden">
            <svg viewBox="0 0 600 540" className="absolute top-0 left-0 h-[540px] w-[600px] drop-shadow-[2px_4px_3px_rgba(0,0,0,0.35)]">
                <g fill="#06b0f0">
                    <path d="M400 80 428 76 426 84 540 117 540 119 421 92 423 98Z" />
                    <path d="M245 178 217 182 220 175 78 127 78 125 226 164 224 159Z" />
                    <path d="M220 416 245 403 244 409 535 407 535 409 244 421 246 426Z" />
                    <path d="M154 458 137 482 134 475 66 513 65 512 129 467 126 462Z" />
                </g>
            </svg>
            <Step n="1" className="top-[104px] left-[550px]" />
            <Step n="2" className="top-[104px] left-[30px]" />
            <Step n="3" className="top-[392px] left-[550px]" />
            <span className="absolute top-[514px] left-[11px] text-[19px] leading-[24px] whitespace-nowrap text-black [text-shadow:2px_2px_3px_rgba(0,0,0,0.35)] font-['Liberation_Sans',Arial,sans-serif]">Double Click it</span>
            <span className="absolute top-[335px] left-[913px] size-[40px] rounded-full bg-[#ffff00]/65" />
        </div>
    );
}

export default function App() {
    return (
        <div className="relative flex min-h-screen w-full flex-col overflow-hidden bg-[#f0f0f0] text-[11px] text-black font-['Open_Sans',sans-serif]">
            <header className="flex h-[23px] items-center bg-white pl-[2px]">
                <svg viewBox="0 0 16 16" className="size-[15px]">
                    <path d="M1 2.5 8 0l7 2.5v7L8 16 1 9.5Z" fill="#333" />
                    <circle cx="8" cy="7.5" r="4.8" fill="#f7a51e" />
                    <circle cx="7" cy="6" r="2" fill="#ffd36b" />
                </svg>
                <span className="pl-[6px] text-[#8f8f8f]">MDriven Designer - C:\temp\MDrivenEducation\Start.modlr</span>
                <CaptionButtons color="#888" className="pr-[3px] pb-[2px]" />
            </header>
            <nav className="flex h-[26px] items-center gap-[20px] bg-linear-to-r from-[#f0f0f0] to-[#fbfbfb] pl-[15px]">
                <button>File</button>
                <button>Edit</button>
                <button>Help</button>
            </nav>
            <div className="flex flex-1 gap-[8px]">
                <main className="flex min-w-0 flex-1 flex-col">
                    <Toolbar />
                    <div className="ml-[2px] flex flex-1 bg-white">
                        <div className="flex-1 pl-[2px] text-[9px] leading-[13px]">License info missing</div>
                        <div className="flex w-[16px] flex-col items-center bg-[#f0f0f0] pt-[3px] pb-px">
                            <ScrollArrow dir="up" />
                            <div className="mt-[2px] mb-[139px] w-full flex-1 bg-[#cdcdcd]" />
                            <ScrollArrow dir="down" />
                        </div>
                    </div>
                    <div className="relative mb-[2px] flex h-[17px] items-center pr-[19px] pl-[5px]">
                        <ScrollArrow dir="left" />
                        <div className="mr-[178px] ml-[2px] h-full flex-1 bg-[#cdcdcd]" />
                        <ScrollArrow dir="right" />
                        <button className="absolute bottom-0 left-[32px] h-[20px] w-[70px] rounded-t-[10px] bg-linear-to-b from-[#c2b2b2] to-[#d6cccc] text-[11px] font-bold text-white">DOC</button>
                    </div>
                </main>
                <ModelPanel />
            </div>
            <footer className="h-[22px] border-t border-white bg-linear-to-r from-[#f0f0f0] to-[#fbfbfb] pl-[4px] leading-[22px]">Load time in seconds 0.5062918</footer>
            <EditorDialog />
            <Annotations />
        </div>
    );
}
